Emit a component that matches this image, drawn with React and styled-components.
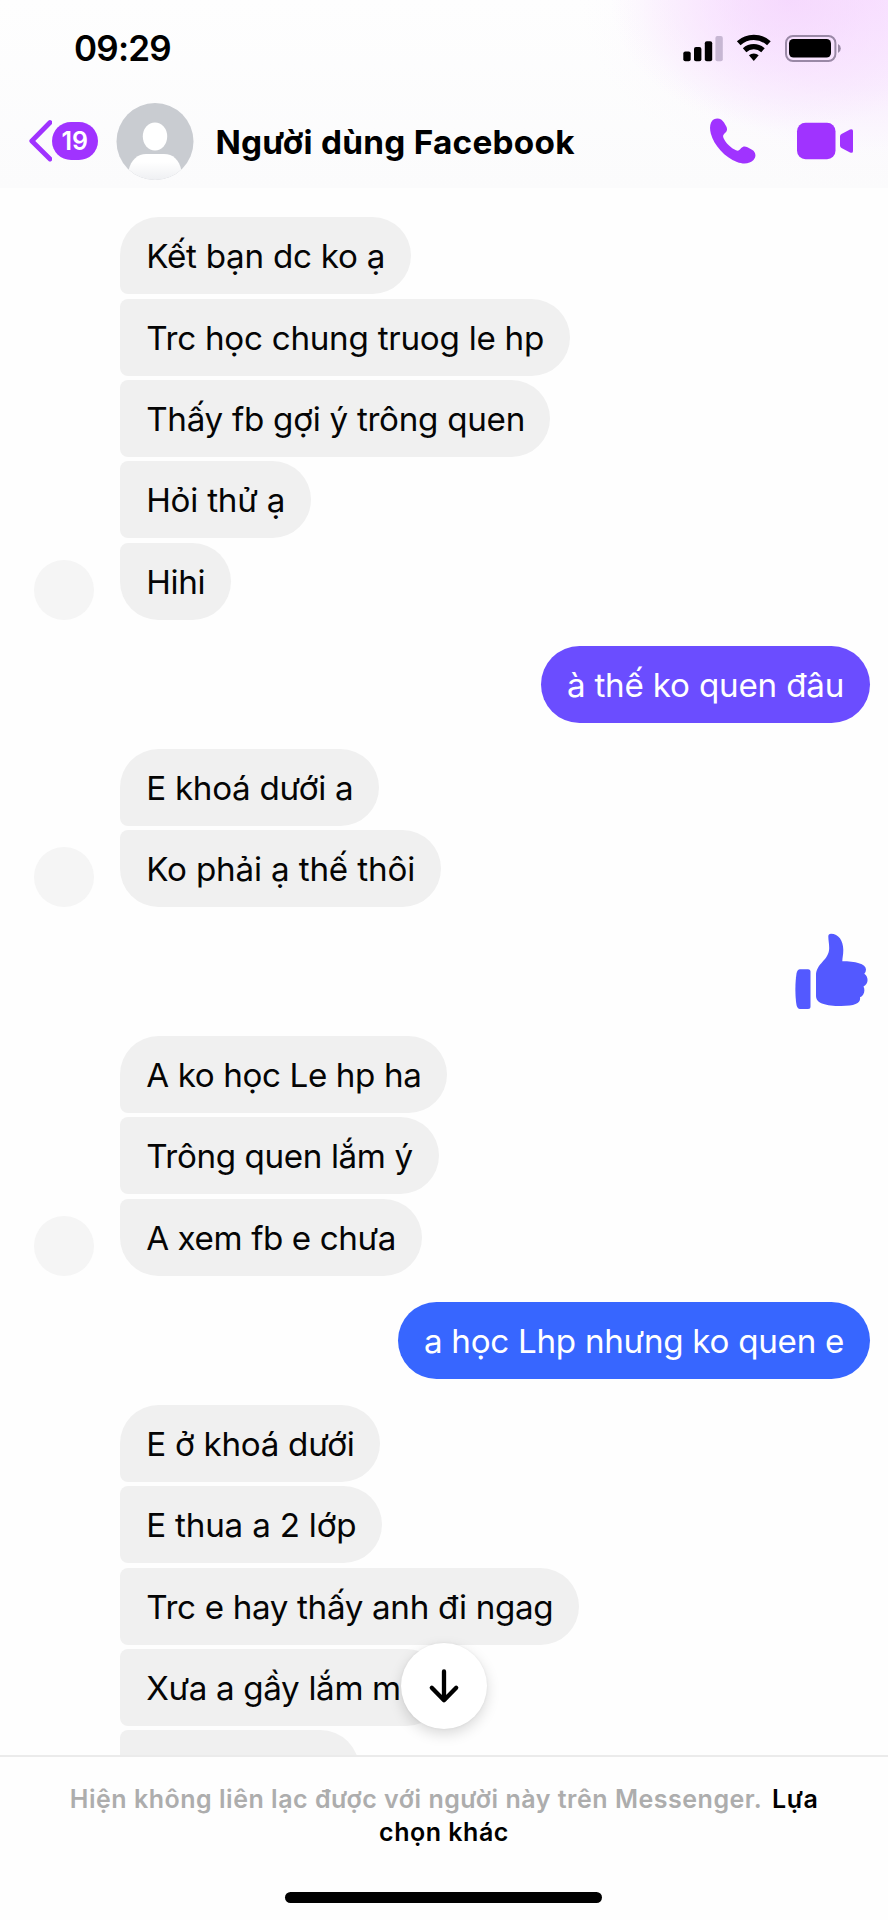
import React from "react";
import styled, { createGlobalStyle } from "styled-components";

const GlobalStyle = createGlobalStyle`
  * { box-sizing: border-box; }
  body { margin: 0; background: #fff; font-family: Inter, "Liberation Sans", sans-serif; color: #000; overflow: hidden; }
`;

const Screen = styled.div`
  width: 888px;
  height: 1920px;
  display: flex;
  flex-direction: column;
  background: #fefefe;
  overflow: hidden;
`;

const Header = styled.header`
  height: 188px;
  flex: none;
  background:
    radial-gradient(ellipse 180px 130px at 790px 0, rgba(244, 210, 253, 0.7) 0%, rgba(246, 216, 254, 0.45) 45%, rgba(250, 236, 255, 0) 100%),
    radial-gradient(ellipse 290px 190px at 870px 0, rgba(247, 222, 255, 0.8) 0%, rgba(248, 230, 255, 0.65) 45%, rgba(251, 246, 255, 0.25) 80%, rgba(252, 250, 255, 0) 100%),
    linear-gradient(#fefefe, #fbfbfc);
`;

const StatusBar = styled.div`
  height: 97px;
  padding: 0 46px 0 74px;
  display: flex;
  align-items: center;
  justify-content: space-between;
`;

const Clock = styled.span`
  font-size: 35px;
  font-weight: 600;
  line-height: 42px;
  margin-bottom: 1px;
  letter-spacing: -0.8px;
`;

const NavBar = styled.div`
  height: 88px;
  padding: 0 34px 0 28px;
  display: flex;
  align-items: center;
`;

const Badge = styled.span`
  width: 46px;
  height: 38px;
  margin-right: 18px;
  border-radius: 19px;
  background: #a033ff;
  color: #fff;
  font-size: 25px;
  font-weight: 600;
  line-height: 38px;
  text-align: center;
`;

const Title = styled.h1`
  margin: 1px auto 0 21.7px;
  font-size: 33.3px;
  font-weight: 700;
  letter-spacing: 0.28px;
  white-space: nowrap;
`;

const Actions = styled.div`
  display: flex;
  align-items: center;
  gap: 40px;
`;

const Thread = styled.main`
  height: 1567px;
  flex: none;
  padding: 29.2px 18.3px 0 34.3px;
  display: flex;
  flex-direction: column;
  gap: 26px;
  overflow: hidden;
`;

const Group = styled.section`
  display: flex;
  flex: none;
  align-items: flex-end;
  justify-content: ${(p) => (p.$mine ? "flex-end" : "flex-start")};
  gap: 25.7px;
`;

const MiniAvatar = styled.div`
  width: 60px;
  height: 60px;
  border-radius: 50%;
  background: ${(p) => (p.$blank ? "transparent" : "#f5f5f5")};
`;

const Stack = styled.div`
  display: flex;
  flex-direction: column;
  align-items: flex-start;
  gap: 4.4px;
`;

const Bubble = styled.div`
  height: 77px;
  width: ${(p) => p.$width}px;
  padding-left: 26.2px;
  border-radius: 38.5px;
  font-size: 33.2px;
  line-height: 78px;
  letter-spacing: ${(p) => p.$tracking || 0}px;
  white-space: nowrap;
  background: ${(p) => p.$color || "#f0f0f0"};
  color: ${(p) => (p.$color ? "#fff" : "#050505")};

  ${Stack} > & { border-top-left-radius: 8px; border-bottom-left-radius: 8px; }
  ${Stack} > &:first-child { border-top-left-radius: 38.5px; }
  ${Stack} > &:last-child { border-bottom-left-radius: 38.5px; }
`;

const LikeRow = styled.div`
  height: 76.8px;
  padding-right: 1.7px;
  display: flex;
  align-items: center;
`;

const Footer = styled.footer`
  position: relative;
  flex: 1;
  border-top: 2px solid #ebebeb;
  display: flex;
  flex-direction: column;
  align-items: center;
  background: #fefefe;
`;

const Notice = styled.p`
  margin: 26px 0 0;
  color: #adadad;
  font-size: 25px;
  font-weight: 600;
  line-height: 33px;
  letter-spacing: 0.52px;
  text-align: center;
  white-space: nowrap;
`;

const NoticeLink = styled.a`
  color: #000;
  margin-left: 3.5px;
`;

const HomeIndicator = styled.div`
  width: 317px;
  height: 11px;
  margin: 43px 1px 0 0;
  border-radius: 6px;
  background: #000;
`;

const ScrollButton = styled.button`
  position: absolute;
  top: -114px;
  left: 401px;
  width: 86px;
  height: 86px;
  padding: 0;
  border: 0;
  border-radius: 50%;
  background: #fff;
  box-shadow: 0 5px 14px rgba(0, 0, 0, 0.15), 0 0 3px rgba(0, 0, 0, 0.06);
  display: flex;
  align-items: center;
  justify-content: center;
`;

const StatusIcons = () => (
  <svg width="160" height="30" viewBox="682 34 160 30">
    <rect x="683.3" y="51.4" width="7.4" height="9.8" rx="2" />
    <rect x="694" y="47" width="7.4" height="14.2" rx="2" />
    <rect x="704.8" y="41.3" width="7.4" height="19.9" rx="2" />
    <rect x="715.4" y="36" width="7.4" height="25.2" rx="2" fill="#c7b7d3" />
    <path d="M738.7 43.2a22.500 22.500 0 0 1 30.200 0" fill="none" stroke="#000" strokeWidth="5.4" />
    <path d="M744.6 50.200a13.800 13.800 0 0 1 18.400 0" fill="none" stroke="#000" strokeWidth="5.2" />
    <path d="M748.9 55.3a7.5 7.5 0 0 1 9.8 0L753.8 61z" />
    <rect x="786" y="36" width="49.4" height="25" rx="7" fill="none" stroke="#9a89a6" strokeWidth="2" />
    <rect x="789" y="39" width="42" height="18.6" rx="4.5" />
    <path d="M838 44a5 5 0 0 1 0 9z" fill="#9a89a6" />
  </svg>
);

const BackIcon = () => (
  <svg width="23.7" height="44" viewBox="28 119 23.7 44">
    <path d="M50 122.5L31.8 141L50 159" fill="none" stroke="#a033ff" strokeWidth="4.8" strokeLinecap="round" strokeLinejoin="round" />
  </svg>
);

const ProfilePicture = () => (
  <svg width="78" height="78" viewBox="0 -0.5 78 78">
    <defs>
      <clipPath id="face"><circle cx="39" cy="39" r="38.5" /></clipPath>
      <linearGradient id="torso" x1="0" y1="0" x2="0" y2="1">
        <stop offset="0.3" stopColor="#fff" /><stop offset="1" stopColor="#eeeff2" />
      </linearGradient>
    </defs>
    <g clipPath="url(#face)">
      <rect width="78" height="78" fill="#c9ccd1" />
      <ellipse cx="39" cy="34" rx="12.2" ry="14" fill="#fff" />
      <path d="M12.5 78V68C15 57 22 51.4 30 51.4H48C57 51.4 63 57 65.5 68V78Z" fill="url(#torso)" />
    </g>
  </svg>
);

const PhoneIcon = () => (
  <svg width="47" height="46" viewBox="709 118.500 47 46">
    <path fill="#a033ff" d="M714 119.700C718 117.800 722 119.500 724 123L726.300 127C727.600 129.500 727 131.500 725.500 133C723.500 135 722.500 136 723.500 138.500C726 144 731 148.500 736 150.800C738.300 151.800 739.300 150.700 741 148.800C743 146.600 745 146.500 747.500 147.800L752 150.300C756 152.600 756.500 157 753.500 160.500C750 164.300 743.500 165 737 162.500C725 158 714 146 710.800 134C709 127 710.500 121.500 714 119.700Z" />
  </svg>
);

const VideoIcon = () => (
  <svg width="58" height="40" viewBox="796 121.500 58 40">
    <rect x="797" y="123.3" width="38.500" height="36.500" rx="8.500" fill="#a033ff" />
    <path d="M841.500 134.500L850 130Q853 128.800 853 131.500V151.500Q853 154.200 850 153L841.500 148.500Q840 147.800 840 146V137Q840 135.200 841.500 134.500Z" fill="#a033ff" />
  </svg>
);

const LikeIcon = () => (
  <svg width="73" height="77" viewBox="795 933 73 77" fill="#5359ff">
    <path d="M800 969.300H808Q810.500 969.300 810.500 971.800V1006.500Q810.500 1009 808 1009H800Q797.500 1009 796.500 1005C795 996 795 983 796.500 973.500Q797.500 969.300 800 969.300Z" />
    <path d="M828.300 936.500Q828.300 933.700 831 933.700C838.500 933.700 843.300 940.500 843.300 950C843.300 955 842.300 958 842.300 961.200C855 961.200 866 963.500 866 969.500Q866 972 864.300 973.800C869 977 868.500 984.500 863.500 986.500C865.500 990.500 864 996 860 997.300C861 1003 855.500 1006 841 1006C826 1006 816 1003.500 816 996V975.500C816 963 829.200 960.500 829.200 948C829.200 943.500 828.300 940 828.300 936.500Z" />
  </svg>
);

const ArrowDownIcon = () => (
  <svg width="34" height="40" viewBox="0 0 34 40">
    <path d="M17 5.500V34M4.800 21.800L17 34.300L29.200 21.800" fill="none" stroke="#000" strokeWidth="4.300" strokeLinecap="round" strokeLinejoin="round" />
  </svg>
);

// Each line holds its text, bubble width and letter spacing.
const conversation = [
  { lines: [["Kết bạn dc ko ạ", 291, -0.25], ["Trc học chung truog le hp", 450, -0.26], ["Thấy fb gợi ý trông quen", 430, -0.28], ["Hỏi thử ạ", 191, -0.22], ["Hihi", 111, -0.35]] },
  { mine: true, color: "#6b4dff", lines: [["à thế ko quen đâu", 329, -0.2]] },
  { lines: [["E khoá dưới a", 259, -0.28], ["Ko phải ạ thế thôi", 321.5, -0.16]] },
  { mine: true, like: true },
  { lines: [["A ko học Le hp ha", 327.5, -0.38], ["Trông quen lắm ý", 319.5, -0.38], ["A xem fb e chưa", 302, -0.4]] },
  { mine: true, color: "#3766ff", lines: [["a học Lhp nhưng ko quen e", 472, -0.28]] },
  { blank: true, lines: [["E ở khoá dưới", 260.5, -0.28], ["E thua a 2 lớp", 262, -0.2], ["Trc e hay thấy anh đi ngag", 459, -0.33], ["Xưa a gầy lắm m", 325, -0.34], ["", 239], ["", 200]] },
];

const Message = ({ line, color }) => (
  <Bubble $width={line[1]} $tracking={line[2]} $color={color}>{line[0]}</Bubble>
);

function MessageGroup({ mine, like, blank, color, lines }) {
  if (like) return <Group $mine><LikeRow><LikeIcon /></LikeRow></Group>;
  if (mine) return <Group $mine>{lines.map((l) => <Message key={l[0]} line={l} color={color} />)}</Group>;
  return (
    <Group>
      <MiniAvatar $blank={blank} />
      <Stack>{lines.map((l, i) => <Message key={i} line={l} />)}</Stack>
    </Group>
  );
}

export default function App() {
  return (
    <Screen>
      <GlobalStyle />
      <Header>
        <StatusBar><Clock>09:29</Clock><StatusIcons /></StatusBar>
        <NavBar>
          <BackIcon />
          <Badge>19</Badge>
          <ProfilePicture />
          <Title>Người dùng Facebook</Title>
          <Actions><PhoneIcon /><VideoIcon /></Actions>
        </NavBar>
      </Header>
      <Thread>
        {conversation.map((group, i) => <MessageGroup key={i} {...group} />)}
      </Thread>
      <Footer>
        <ScrollButton aria-label="Scroll down"><ArrowDownIcon /></ScrollButton>
        <Notice>
          Hiện không liên lạc được với người này trên Messenger. <NoticeLink>Lựa<br />chọn khác</NoticeLink>
        </Notice>
        <HomeIndicator />
      </Footer>
    </Screen>
  );
}
